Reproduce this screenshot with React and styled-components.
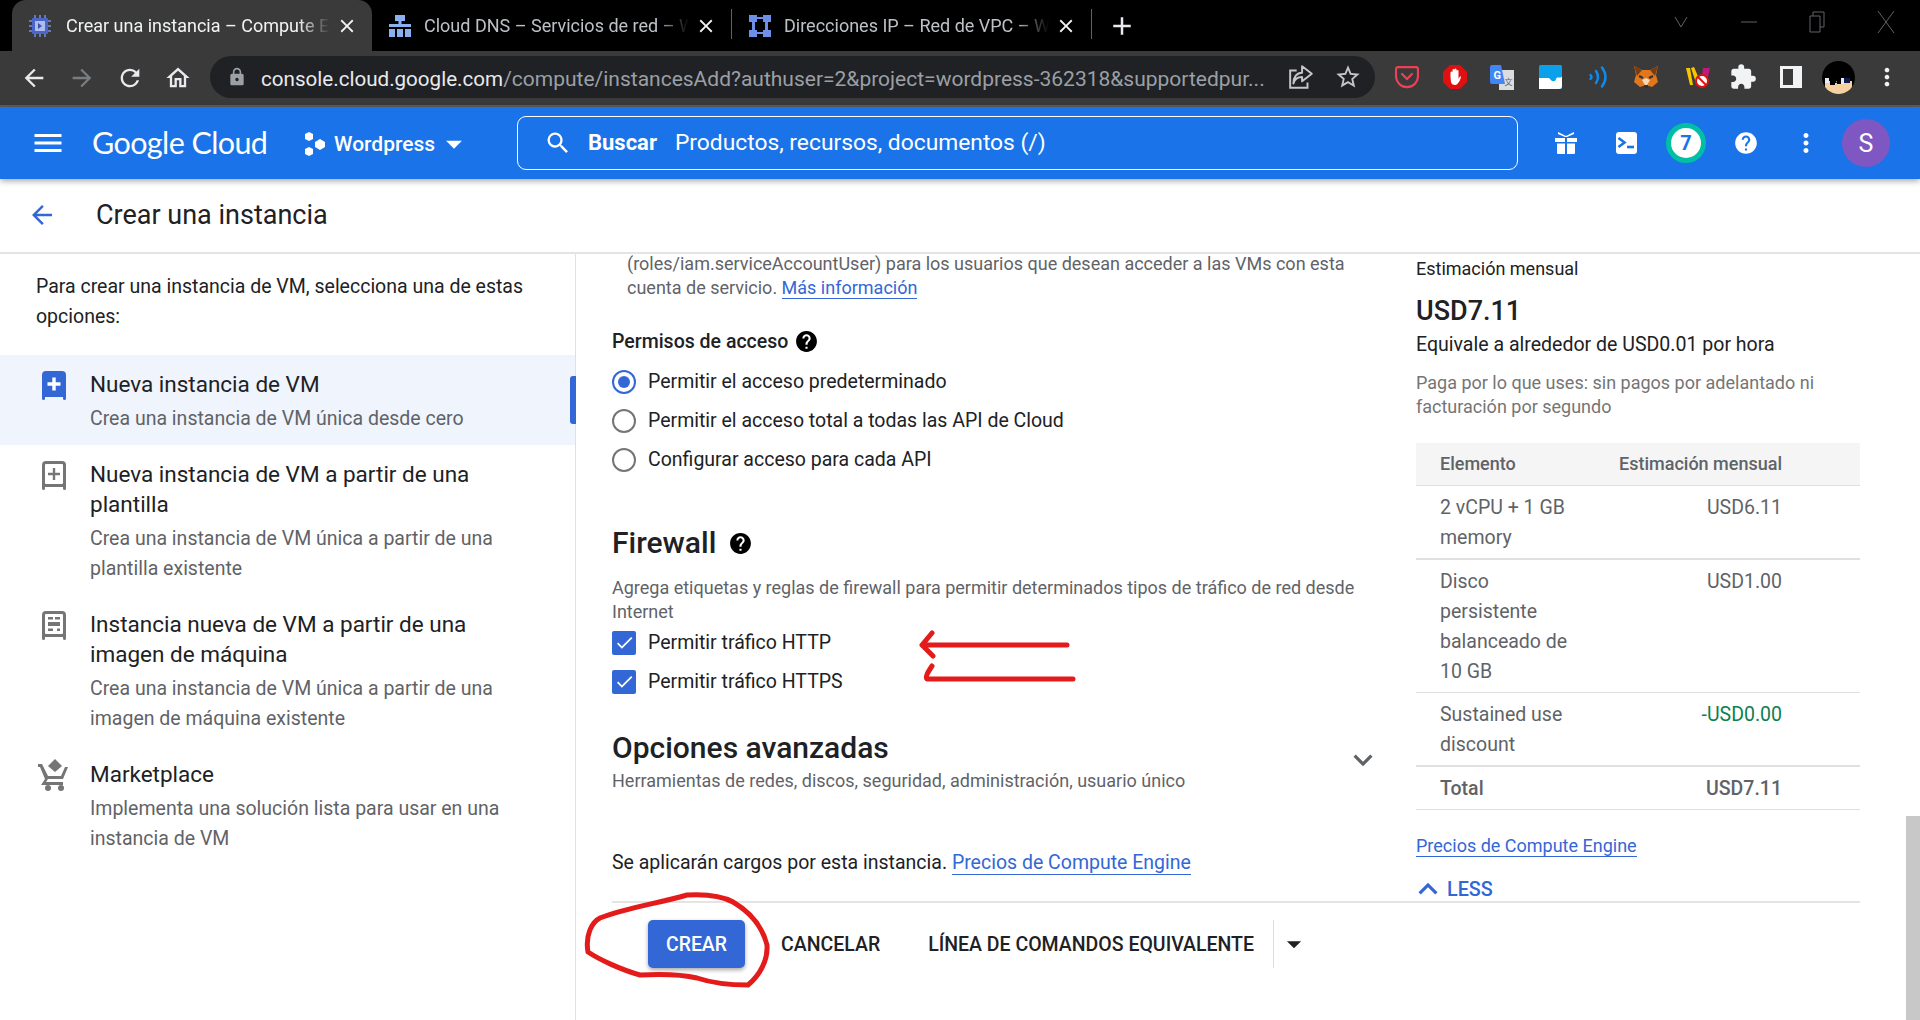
import React from "react";
import styled, { createGlobalStyle } from "styled-components";
import {
  MdArrowBack,
  MdArrowForward,
  MdRefresh,
  MdClose,
  MdAdd,
  MdLock,
  MdStarBorder,
  MdMenu,
  MdSearch,
  MdHelp,
  MdMoreVert,
  MdExpandMore,
  MdExpandLess,
  MdArrowDropDown,
  MdExtension,
  MdCheck,
  MdOutlineHome,
} from "react-icons/md";

const GlobalStyle = createGlobalStyle`
  * { box-sizing: border-box; }
  html, body { margin: 0; height: 100%; overflow: hidden; background: #fff; }
  body { font-family: Roboto, "Liberation Sans", sans-serif; color: #202124; }
`;

const Page = styled.div`
  position: relative;
  width: 1920px;
  height: 1020px;
  display: flex;
  flex-direction: column;
  overflow: hidden;
`;

/* browser chrome */
const TabStrip = styled.div`
  height: 51px;
  background: #000;
  display: flex;
  align-items: stretch;
  padding-left: 12px;
  flex-shrink: 0;
`;

const Tab = styled.div`
  width: ${(p) => (p.$active ? "360px" : "359px")};
  display: flex;
  align-items: center;
  padding: 0 14px 0 16px;
  background: ${(p) => (p.$active ? "#3a3a3a" : "transparent")};
  border-radius: 14px 14px 0 0;
  color: ${(p) => (p.$active ? "#f1f3f4" : "#bdc1c6")};
  position: relative;
`;

const TabDivider = styled.span`
  width: 1px;
  height: 30px;
  background: #5f6368;
  align-self: center;
  margin-top: -3px;
  flex-shrink: 0;
`;

const TabTitle = styled.span`
  flex: 1;
  margin-left: ${(p) => (p.$active ? 14 : 12)}px;
  font-size: 18px;
  white-space: nowrap;
  overflow: hidden;
  -webkit-mask-image: linear-gradient(to right, #000 88%, transparent);
  mask-image: linear-gradient(to right, #000 88%, transparent);
`;

const TabClose = styled(MdClose)`
  font-size: 22px;
  color: #f1f3f4;
  margin-left: 6px;
`;

const NewTab = styled(MdAdd)`
  font-size: 30px;
  color: #e8eaed;
  align-self: center;
  margin-left: 15px;
`;

const WindowButtons = styled.div`
  margin-left: auto;
  display: flex;
  align-items: center;
  height: 44px;
  gap: 52px;
  padding-right: 25px;
  color: #5f6368;
`;

const Toolbar = styled.div`
  height: 56px;
  background: #3a3a3a;
  border-bottom: 2px solid #5c5c5c;
  display: flex;
  align-items: center;
  flex-shrink: 0;
  position: relative;
`;

const NavIcons = styled.div`
  display: flex;
  align-items: center;
  gap: 20px;
  width: 210px;
  padding-left: 20px;
  color: #e8eaed;
  font-size: 28px;
`;

const Omnibox = styled.div`
  width: 1165px;
  height: 42px;
  border-radius: 21px;
  background: #202124;
  display: flex;
  align-items: center;
  padding: 0 13px 0 17px;
  margin-top: -2px;
`;

const Url = styled.div`
  margin-left: 14px;
  padding-top: 3px;
  flex: 1;
  font-size: 21px;
  color: #9aa0a6;
  white-space: nowrap;
  overflow: hidden;
  b {
    font-weight: 400;
    font-size: 20.6px;
    color: #e8eaed;
  }
`;

const OmniActions = styled.div`
  display: flex;
  align-items: center;
  gap: 20px;
  color: #c4c7ca;
  font-size: 28px;
  margin-left: 16px;
`;

const Extensions = styled.div`
  display: flex;
  align-items: center;
  margin-left: 8px;
  margin-top: -2px;
`;

const ExtSlot = styled.div`
  width: 47.8px;
  height: 40px;
  padding-left: ${(p) => p.$nudge || 0}px;
  display: flex;
  align-items: center;
  justify-content: center;
  color: #f1f3f4;
`;

/* cloud console header */
const CloudBar = styled.header`
  height: 72px;
  background: #1a73e8;
  display: flex;
  align-items: center;
  color: #fff;
  flex-shrink: 0;
  box-shadow: 0 2px 6px rgba(0, 0, 0, 0.35);
  position: relative;
  z-index: 2;
`;

const MenuButton = styled(MdMenu)`
  font-size: 36px;
  margin-left: 30px;
`;

const Logo = styled.div`
  margin-left: 26px;
  margin-top: -3px;
  font-family: Lato, Roboto, sans-serif;
  font-size: 30.5px;
  letter-spacing: -0.6px;
  width: 175px;
  white-space: nowrap;
`;

const ProjectPicker = styled.div`
  display: flex;
  align-items: center;
  margin-left: 37px;
  margin-top: 1px;
  width: 213px;
  font-size: 21px;
  font-weight: 500;
`;

const ProjectName = styled.span`
  margin-left: 8px;
`;

const SearchBox = styled.div`
  width: 1001px;
  height: 54px;
  border: 1px solid #fff;
  border-radius: 9px;
  display: flex;
  align-items: center;
  padding-left: 26px;
  font-size: 22.8px;
  margin-top: -1px;
  b {
    font-weight: 700;
    font-size: 22px;
    margin: 0 18px 0 16px;
  }
`;

const HeaderIcons = styled.div`
  display: flex;
  align-items: center;
  margin-left: 18px;
`;

const HeaderSlot = styled.div`
  width: 60px;
  height: 48px;
  display: flex;
  align-items: center;
  justify-content: center;
`;

const Notif = styled.div`
  width: 40px;
  height: 40px;
  border-radius: 50%;
  border: 5px solid #00bfa5;
  background: #fff;
  color: #1a73e8;
  font-size: 20px;
  font-weight: 700;
  display: flex;
  align-items: center;
  justify-content: center;
`;

const Avatar = styled.div`
  width: 48px;
  height: 48px;
  border-radius: 50%;
  background: #7e57c2;
  color: #fff;
  font-size: 25px;
  display: flex;
  align-items: center;
  justify-content: center;
`;

/* page title */
const TitleBar = styled.div`
  height: 75px;
  background: #fff;
  border-bottom: 2px solid #e4e4e4;
  display: flex;
  align-items: center;
  flex-shrink: 0;
  padding-bottom: 2px;
`;

const BackArrow = styled(MdArrowBack)`
  font-size: 30px;
  color: #3367d6;
  margin-left: 27px;
`;

const PageTitle = styled.h1`
  margin: 0 0 0 39px;
  font-size: 27px;
  font-weight: 400;
  color: #202124;
`;

const Body = styled.div`
  flex: 1;
  display: flex;
  min-height: 0;
`;

/* left picker */
const SidePanel = styled.aside`
  width: 576px;
  flex-shrink: 0;
  border-right: 1px solid #dfe1e5;
`;

const SideIntro = styled.p`
  margin: 0;
  padding: 18px 40px 0 36px;
  height: 101px;
  font-size: 19.5px;
  line-height: 30px;
  color: #202124;
`;

const SideItem = styled.div`
  position: relative;
  display: grid;
  grid-template-columns: 90px 1fr;
  padding: ${(p) => p.$pad};
  background: ${(p) => (p.$active ? "#f0f4fd" : "transparent")};
`;

const SideIcon = styled.div`
  display: flex;
  justify-content: center;
  padding-left: 17px;
  margin-top: ${(p) => (p.$cart ? "0" : "2px")};
  color: ${(p) => (p.$active ? "#3367d6" : "#757575")};
`;

const SideTitle = styled.div`
  font-size: 22.5px;
  line-height: 30px;
  color: #202124;
`;

const SideDesc = styled.div`
  font-size: 19.5px;
  line-height: 30px;
  margin-top: 5px;
  color: #5f6368;
`;

const ActiveMark = styled.span`
  position: absolute;
  right: -1px;
  top: 21px;
  width: 6px;
  height: 48px;
  border-radius: 3px 0 0 3px;
  background: #3367d6;
`;

/* form + estimate */
const Content = styled.main`
  flex: 1;
  display: flex;
  flex-direction: column;
  min-width: 0;
`;

const Upper = styled.div`
  height: 647px;
  display: flex;
  overflow: hidden;
`;

const FormColumn = styled.section`
  width: 840px;
  flex-shrink: 0;
  padding-left: 36px;
`;

const HintIndented = styled.p`
  margin: -2px 0 0 15px;
  width: 730px;
  font-size: 18px;
  line-height: 24px;
  color: #5f6368;
`;

const TextLink = styled.a`
  color: #3367d6;
  border-bottom: 1px solid #3367d6;
  text-decoration: none;
`;

const FieldLabel = styled.div`
  margin-top: 29px;
  display: flex;
  align-items: center;
  gap: 6px;
  font-size: 19.5px;
  font-weight: 500;
  line-height: 24px;
`;

const OptionRow = styled.label`
  height: 39px;
  display: flex;
  align-items: center;
  gap: 12px;
  font-size: 19.5px;
  color: #202124;
`;

const OptionGroup = styled.div`
  margin-top: ${(p) => p.$mt || 0}px;
`;

const Radio = styled.span`
  width: 24px;
  height: 24px;
  border-radius: 50%;
  border: 2.5px solid ${(p) => (p.$on ? "#3367d6" : "#757575")};
  display: flex;
  align-items: center;
  justify-content: center;
  &::after {
    content: "";
    width: 12px;
    height: 12px;
    border-radius: 50%;
    background: ${(p) => (p.$on ? "#3367d6" : "transparent")};
  }
`;

const Checkbox = styled.span`
  width: 24px;
  height: 24px;
  border-radius: 2px;
  background: #3367d6;
  color: #fff;
  font-size: 21px;
  display: flex;
  align-items: center;
  justify-content: center;
`;

const SectionTitle = styled.h2`
  margin: ${(p) => p.$mt}px 0 0;
  display: flex;
  align-items: center;
  gap: 12px;
  font-size: 30px;
  font-weight: 500;
  line-height: 36px;
  color: #202124;
`;

const Hint = styled.p`
  margin: ${(p) => p.$mt}px 0 0;
  width: 750px;
  font-size: 18px;
  line-height: 24px;
  color: #5f6368;
`;

const AdvancedRow = styled.div`
  position: relative;
  width: 760px;
`;

const AdvancedChevron = styled(MdExpandMore)`
  position: absolute;
  right: -10px;
  top: 11px;
  font-size: 38px;
  color: #5f6368;
`;

const ChargeNote = styled.p`
  margin: 57px 0 0;
  font-size: 19.5px;
  line-height: 26px;
  color: #202124;
`;

const EstimateColumn = styled.section`
  width: 444px;
  flex-shrink: 0;
`;

const EstLabel = styled.div`
  margin-top: 3px;
  font-size: 18px;
  line-height: 24px;
`;

const EstPrice = styled.div`
  margin-top: 12px;
  font-size: 27px;
  font-weight: 500;
  line-height: 36px;
`;

const EstHourly = styled.div`
  margin-top: 3px;
  font-size: 19.55px;
  line-height: 26px;
`;

const EstNote = styled.p`
  margin: 13px 0 0;
  font-size: 18px;
  line-height: 24px;
  color: #757575;
`;

const Table = styled.div`
  margin-top: 24px;
  font-size: 19.5px;
  color: #5f6368;
`;

const TableRow = styled.div`
  display: grid;
  grid-template-columns: 140px 1fr;
  padding: ${(p) => (p.$head ? "6px 78px 6px 24px" : "7px 78px 5px 24px")};
  line-height: 30px;
  border-bottom: ${(p) => p.$rule || 1}px solid #e0e0e0;
  background: ${(p) => (p.$head ? "#f5f5f5" : "transparent")};
  font-weight: ${(p) => (p.$bold ? 500 : 400)};
  font-size: ${(p) => (p.$head ? "18px" : "inherit")};
`;

const Amount = styled.div`
  text-align: right;
  white-space: nowrap;
  color: ${(p) => (p.$green ? "#0d8050" : "inherit")};
`;

const EstLink = styled.div`
  margin-top: 23px;
  font-size: 18px;
  line-height: 26px;
`;

const LessToggle = styled.div`
  margin-top: 18px;
  display: flex;
  align-items: center;
  height: 24px;
  color: #3367d6;
  font-size: 19.8px;
  font-weight: 500;
`;

const LessChevron = styled(MdExpandLess)`
  font-size: 38px;
  margin: 0 0 0 -7px;
`;

/* sticky actions */
const Footer = styled.div`
  margin-left: 36px;
  width: 1248px;
  border-top: 2px solid #e4e4e4;
  padding: 17px 0 0 36px;
  display: flex;
  align-items: flex-start;
`;

const PrimaryButton = styled.button`
  width: 97px;
  height: 48px;
  border: 0;
  border-radius: 5px;
  background: #3367d6;
  color: #fff;
  font-family: inherit;
  font-size: 19.4px;
  font-weight: 500;
  box-shadow: 0 2px 4px rgba(0, 0, 0, 0.35);
`;

const FlatButton = styled.button`
  height: 48px;
  border: 0;
  padding: 0;
  margin-left: ${(p) => p.$ml}px;
  background: none;
  color: #202124;
  font-family: inherit;
  font-size: 19.5px;
  font-weight: 500;
`;

const SplitCaret = styled.div`
  margin-left: 19px;
  height: 48px;
  border-left: 1px solid #dadce0;
  padding-left: 3px;
  display: flex;
  align-items: center;
  color: #202124;
  font-size: 34px;
`;

const Scrollbar = styled.div`
  position: absolute;
  right: 0;
  top: 816px;
  bottom: 0;
  width: 14px;
  background: #c8c8c8;
`;

const Scribbles = styled.svg`
  position: absolute;
  inset: 0;
  pointer-events: none;
`;

const TabChip = () => (
  <svg width="24" height="24" viewBox="0 0 24 24">
    <path d="M7 1v22M12 1v22M17 1v22M1 7h22M1 12h22M1 17h22" stroke="#7b8fe0" strokeWidth="1.5" />
    <rect x="4" y="4" width="16" height="16" rx="1" fill="#4a67c8" />
    <rect x="7" y="7" width="10" height="10" fill="#aebcf0" />
    <path d="M10 9l4 3-4 3z" fill="#3a55b0" />
  </svg>
);

const TabDns = () => (
  <svg width="24" height="24" viewBox="0 0 24 24" fill="#8ab0f0">
    <rect x="7" y="1" width="10" height="6" />
    <rect x="1" y="10" width="22" height="3" />
    <rect x="10.5" y="7" width="3" height="5" />
    <rect x="1" y="15" width="6" height="8" />
    <rect x="9" y="15" width="6" height="8" />
    <rect x="17" y="15" width="6" height="8" />
  </svg>
);

const TabIp = () => (
  <svg width="24" height="24" viewBox="0 0 24 24" fill="#6d8fe8">
    <rect x="1" y="1" width="8" height="7" />
    <rect x="15" y="1" width="8" height="7" />
    <rect x="1" y="16" width="8" height="7" />
    <rect x="15" y="16" width="8" height="7" />
    <rect x="4" y="8" width="3" height="8" />
    <rect x="17" y="8" width="3" height="8" />
    <rect x="9" y="3" width="6" height="2" />
    <rect x="9" y="18" width="6" height="2" />
  </svg>
);

const ShareIcon = () => (
  <svg width="26" height="26" viewBox="0 0 24 24" fill="none" stroke="#c4c7ca" strokeWidth="1.8">
    <path d="M8 6H2v16h16v-5" />
    <path d="M13 2l9 7-9 7v-4c-4 0-7 2-8 6 0-6 3-10 8-10z" strokeLinejoin="round" />
  </svg>
);

const PocketIcon = () => (
  <svg width="24" height="23" viewBox="0 0 24 23" fill="none" stroke="#ef4056" strokeWidth="2.2">
    <path d="M3 1.200h18a2 2 0 0 1 2 2v7a11 11 0 0 1-22 0v-7a2 2 0 0 1 2-2z" />
    <path d="M7 8l5 5 5-5" strokeLinecap="round" />
  </svg>
);

const StopIcon = () => (
  <svg width="24" height="24" viewBox="0 0 24 24">
    <path d="M7 0h10l7 7v10l-7 7H7l-7-7V7z" fill="#e01010" />
    <path d="M7.500 12V7.500a1 1 0 0 1 2 0V5a1 1 0 0 1 2 0V4.500a1 1 0 0 1 2 0V6a1 1 0 0 1 2 0v8c1-2 2-3 2.500-2.500 0 1-2 8-5.500 8.500-3 0-4-1-4.500-3z" fill="#fff" />
  </svg>
);

const TranslateIcon = () => (
  <svg width="24" height="25" viewBox="0 0 24 25">
    <path d="M9 5h15v20H9z" fill="#dadce0" />
    <path d="M0 2a2 2 0 0 1 2-2h9l4 19H2a2 2 0 0 1-2-2z" fill="#4285f4" />
    <text x="3.500" y="13.500" fontFamily="Roboto, sans-serif" fontSize="11" fontWeight="700" fill="#fff">G</text>
    <text x="14.500" y="20" fontFamily="'Noto Sans CJK SC', sans-serif" fontSize="8" fill="#5f6368">文</text>
  </svg>
);

const FolderIcon = () => (
  <svg width="23" height="24" viewBox="0 0 23 24">
    <rect width="23" height="24" rx="1.500" fill="#0aa0ea" />
    <path d="M0 13h10l3 3h3l2-4h5v9a3 3 0 0 1-3 3H0z" fill="#fff" />
    <path d="M15 16l2-4h5" stroke="#0aa0ea" strokeWidth="1" fill="none" />
  </svg>
);

const WaveIcon = () => (
  <svg width="19" height="22" viewBox="0 0 19 22" fill="none" stroke="#0d8cf0" strokeWidth="2.400" strokeLinecap="round">
    <path d="M1.500 9q2 2 0 4" />
    <path d="M7 5q4 6 0 12" />
    <path d="M13 1.500q7 9.500 0 19" />
  </svg>
);

const FoxIcon = () => (
  <svg width="24" height="24" viewBox="0 0 24 24">
    <path d="M0 1l8 4h8l8-4-2 9 2 7-6 5-3-1h-6l-3 1-6-5 2-7z" fill="#e2761b" />
    <path d="M0 1l8 4-5 6zM24 1l-8 4 5 6z" fill="#763d16" />
    <path d="M8 15l4 7 4-7-4-2z" fill="#f6d7b8" />
    <path d="M5 11l4 2M19 11l-4 2" stroke="#233447" strokeWidth="2" />
    <path d="M10 20h4v3h-4z" fill="#33302e" />
  </svg>
);

const BlockIcon = () => (
  <svg width="24" height="21" viewBox="0 0 24 21">
    <path d="M0 1h4l3 17H4z" fill="#f7c600" />
    <path d="M5 1l5 15 4-2-6-14z" fill="#f7c600" />
    <path d="M17 1h7l-2 9h-6z" fill="#c2187e" />
    <circle cx="16" cy="14" r="6" fill="#fff" stroke="#e01010" strokeWidth="2" />
    <path d="M12 10l8 8" stroke="#e01010" strokeWidth="2" />
  </svg>
);

const PanelIcon = () => (
  <svg width="22" height="22" viewBox="0 0 22 22">
    <path d="M0 0h22v22H0zM3 3v16h10V3z" fill="#f1f3f4" fillRule="evenodd" />
  </svg>
);

const ChromeAvatar = () => (
  <svg width="33" height="33" viewBox="0 0 33 33">
    <defs>
      <clipPath id="avatar-round">
        <circle cx="16.500" cy="16.500" r="16.500" />
      </clipPath>
    </defs>
    <g clipPath="url(#avatar-round)">
      <rect width="33" height="33" fill="#000" />
      <path d="M3 20h27v13H3z" fill="#f5d0a0" />
      <path d="M3 17h4v5H3z" fill="#e8eaf6" />
      <path d="M12 15l3 7h-3zM15 19h5v4h-5z" fill="#000" />
      <path d="M21 17h7v5h-7z" fill="#101a50" />
      <path d="M19 17h3v6h-3z" fill="#e8eaf6" />
      <path d="M8 17h5v7H8z" fill="#000" />
    </g>
  </svg>
);

const HexIcon = () => (
  <svg width="22" height="26" viewBox="0 0 22 26" fill="#fff">
    <path d="M5 1l4 2v5l-4 2-4-2V3z" />
    <path d="M16 8l5 3v5l-5 3-5-3v-5z" />
    <path d="M5 16l4 2v5l-4 2-4-2v-5z" />
  </svg>
);

const GiftIcon = () => (
  <svg width="22" height="22" viewBox="0 0 22 22" fill="#fff">
    <path d="M0 6h10v4H0zM12 6h10v4H12zM2 11.500h8V22H3a1 1 0 0 1-1-1zM12 11.500h8V21a1 1 0 0 1-1 1h-7z" />
    <path d="M3 0l8 4 8-4v2l-7 3h-2L3 2z" />
  </svg>
);

const TerminalIcon = () => (
  <svg width="21" height="22" viewBox="0 0 21 22">
    <rect width="21" height="22" rx="3" fill="#fff" />
    <path d="M2.500 6l6 4.500-6 4.500" stroke="#1a73e8" strokeWidth="2.600" fill="none" />
    <path d="M11 15h7" stroke="#1a73e8" strokeWidth="2.600" />
  </svg>
);

const VmIcon = ({ variant }) => (
  <svg width="24" height="29" viewBox="0 0 24 29">
    <path
      d="M4 0h16a4 4 0 0 1 4 4v23.500a1.500 1.500 0 0 1-3 0V26H3v1.500a1.500 1.500 0 0 1-3 0V4a4 4 0 0 1 4-4z"
      fill="currentColor"
    />
    {variant === "solid" && <path d="M10.300 6.500h3.400v4.800h4.800v3.400h-4.800v4.800h-3.400v-4.800H5.500v-3.400h4.800z" fill="#fff" />}
    {variant === "outline" && (
      <>
        <rect x="3" y="3" width="18" height="20" rx="1" fill="#fff" />
        <path d="M10.800 7h2.400v4.800H18v2.400h-4.800V19h-2.400v-4.800H6v-2.400h4.800z" fill="currentColor" />
      </>
    )}
    {variant === "image" && (
      <>
        <rect x="3" y="3" width="18" height="20" rx="1" fill="#fff" />
        <path d="M6 6h5v2.500H6zM13 6h5v2.500h-5zM6 11h12v4H6zM6 17.500h5V20H6zM15 17.500h3V20h-3z" fill="currentColor" />
      </>
    )}
  </svg>
);

const CartIcon = () => (
  <svg width="32" height="32" viewBox="0 0 32 32" fill="currentColor">
    <path d="M17 0l7 7-7 6-7-6z" />
    <path d="M0 5h4l2 4 4 8h13l4-9h3l-5 12H10l-2 3h17v3H3l4-6L2 8H0z" />
    <circle cx="10" cy="29" r="3" />
    <circle cx="23" cy="29" r="3" />
  </svg>
);

const sideItems = [
  {
    icon: "solid",
    title: "Nueva instancia de VM",
    desc: "Crea una instancia de VM única desde cero",
    active: true,
    pad: "14px 40px 11px 0",
  },
  {
    icon: "outline",
    title: "Nueva instancia de VM a partir de una plantilla",
    desc: "Crea una instancia de VM única a partir de una plantilla existente",
    pad: "14px 40px 11px 0",
  },
  {
    icon: "image",
    title: "Instancia nueva de VM a partir de una imagen de máquina",
    desc: "Crea una instancia de VM única a partir de una imagen de máquina existente",
    pad: "14px 40px 25px 0",
  },
  {
    icon: "cart",
    title: "Marketplace",
    desc: "Implementa una solución lista para usar en una instancia de VM",
    pad: "0 40px 0 0",
  },
];

const rows = [
  { name: "2 vCPU + 1 GB memory", price: "USD6.11", rule: 2 },
  { name: "Disco persistente balanceado de 10 GB", price: "USD1.00" },
  { name: "Sustained use discount", price: "-USD0.00", green: true, rule: 2 },
];

export default function App() {
  return (
    <Page>
      <GlobalStyle />
      <TabStrip>
        <Tab $active>
          <TabChip />
          <TabTitle $active>Crear una instancia – Compute Engine</TabTitle>
          <TabClose />
        </Tab>
        <Tab>
          <TabDns />
          <TabTitle>Cloud DNS – Servicios de red – Wordpress</TabTitle>
          <TabClose />
        </Tab>
        <TabDivider />
        <Tab>
          <TabIp />
          <TabTitle>Direcciones IP – Red de VPC – Wordpress</TabTitle>
          <TabClose />
        </Tab>
        <TabDivider />
        <NewTab />
        <WindowButtons>
          <svg width="16" height="12" viewBox="0 0 16 12" fill="none" stroke="currentColor"><path d="M2 1l6 10 6-10" /></svg>
          <svg width="16" height="2" viewBox="0 0 16 2"><path d="M0 1h16" stroke="currentColor" /></svg>
          <svg width="16" height="22" viewBox="0 0 16 22" fill="none" stroke="currentColor"><path d="M1 5h10v16H1zM4 5V1h11v15h-4" /></svg>
          <svg width="18" height="24" viewBox="0 0 18 24" fill="none" stroke="currentColor"><path d="M1 1l16 22M17 1L1 23" /></svg>
        </WindowButtons>
      </TabStrip>

      <Toolbar>
        <NavIcons>
          <MdArrowBack />
          <MdArrowForward color="#7a7d80" />
          <MdRefresh />
          <MdOutlineHome />
        </NavIcons>
        <Omnibox>
          <MdLock size={20} color="#9aa0a6" />
          <Url>
            <b>console.cloud.google.com</b>/compute/instancesAdd?authuser=2&amp;project=wordpress-362318&amp;supportedpur...
          </Url>
          <OmniActions>
            <ShareIcon />
            <MdStarBorder />
          </OmniActions>
        </Omnibox>
        <Extensions>
          <ExtSlot><PocketIcon /></ExtSlot>
          <ExtSlot><StopIcon /></ExtSlot>
          <ExtSlot><TranslateIcon /></ExtSlot>
          <ExtSlot><FolderIcon /></ExtSlot>
          <ExtSlot><WaveIcon /></ExtSlot>
          <ExtSlot><FoxIcon /></ExtSlot>
          <ExtSlot $nudge={8}><BlockIcon /></ExtSlot>
          <ExtSlot $nudge={4}><MdExtension size={28} /></ExtSlot>
          <ExtSlot $nudge={4}><PanelIcon /></ExtSlot>
          <ExtSlot $nudge={2}><ChromeAvatar /></ExtSlot>
          <ExtSlot $nudge={4}><MdMoreVert size={28} /></ExtSlot>
        </Extensions>
      </Toolbar>

      <CloudBar>
        <MenuButton />
        <Logo>Google Cloud</Logo>
        <ProjectPicker>
          <HexIcon />
          <ProjectName>Wordpress</ProjectName>
          <MdArrowDropDown size={38} />
        </ProjectPicker>
        <SearchBox>
          <MdSearch size={28} />
          <b>Buscar</b>
          Productos, recursos, documentos (/)
        </SearchBox>
        <HeaderIcons>
          <HeaderSlot><GiftIcon /></HeaderSlot>
          <HeaderSlot><TerminalIcon /></HeaderSlot>
          <HeaderSlot><Notif>7</Notif></HeaderSlot>
          <HeaderSlot><MdHelp size={26} /></HeaderSlot>
          <HeaderSlot><MdMoreVert size={30} /></HeaderSlot>
          <HeaderSlot><Avatar>S</Avatar></HeaderSlot>
        </HeaderIcons>
      </CloudBar>

      <TitleBar>
        <BackArrow />
        <PageTitle>Crear una instancia</PageTitle>
      </TitleBar>

      <Body>
        <SidePanel>
          <SideIntro>Para crear una instancia de VM, selecciona una de estas opciones:</SideIntro>
          {sideItems.map((item) => (
            <SideItem key={item.title} $active={item.active} $pad={item.pad}>
              <SideIcon $active={item.active} $cart={item.icon === "cart"}>
                {item.icon === "cart" ? <CartIcon /> : <VmIcon variant={item.icon} />}
              </SideIcon>
              <div>
                <SideTitle>{item.title}</SideTitle>
                <SideDesc>{item.desc}</SideDesc>
              </div>
              {item.active && <ActiveMark />}
            </SideItem>
          ))}
        </SidePanel>

        <Content>
          <Upper>
            <FormColumn>
              <HintIndented>
                (roles/iam.serviceAccountUser) para los usuarios que desean acceder a las VMs con esta cuenta de servicio.{" "}
                <TextLink>Más información</TextLink>
              </HintIndented>
              <FieldLabel>
                Permisos de acceso <MdHelp size={25} color="#000" />
              </FieldLabel>
              <OptionGroup $mt={8}>
                <OptionRow><Radio $on />Permitir el acceso predeterminado</OptionRow>
                <OptionRow><Radio />Permitir el acceso total a todas las API de Cloud</OptionRow>
                <OptionRow><Radio />Configurar acceso para cada API</OptionRow>
              </OptionGroup>
              <SectionTitle $mt={46}>
                Firewall <MdHelp size={25} color="#000" />
              </SectionTitle>
              <Hint $mt={15}>
                Agrega etiquetas y reglas de firewall para permitir determinados tipos de tráfico de red desde Internet
              </Hint>
              <OptionGroup $mt={-1}>
                <OptionRow><Checkbox><MdCheck /></Checkbox>Permitir tráfico HTTP</OptionRow>
                <OptionRow><Checkbox><MdCheck /></Checkbox>Permitir tráfico HTTPS</OptionRow>
              </OptionGroup>
              <AdvancedRow>
                <SectionTitle $mt={29}>Opciones avanzadas</SectionTitle>
                <Hint $mt={3}>Herramientas de redes, discos, seguridad, administración, usuario único</Hint>
                <AdvancedChevron />
              </AdvancedRow>
              <ChargeNote>
                Se aplicarán cargos por esta instancia. <TextLink>Precios de Compute Engine</TextLink>
              </ChargeNote>
            </FormColumn>

            <EstimateColumn>
              <EstLabel>Estimación mensual</EstLabel>
              <EstPrice>USD7.11</EstPrice>
              <EstHourly>Equivale a alrededor de USD0.01 por hora</EstHourly>
              <EstNote>Paga por lo que uses: sin pagos por adelantado ni facturación por segundo</EstNote>
              <Table>
                <TableRow $head $bold>
                  <div>Elemento</div>
                  <Amount>Estimación mensual</Amount>
                </TableRow>
                {rows.map((row) => (
                  <TableRow key={row.name} $rule={row.rule}>
                    <div>{row.name}</div>
                    <Amount $green={row.green}>{row.price}</Amount>
                  </TableRow>
                ))}
                <TableRow $bold>
                  <div>Total</div>
                  <Amount>USD7.11</Amount>
                </TableRow>
              </Table>
              <EstLink><TextLink>Precios de Compute Engine</TextLink></EstLink>
              <LessToggle><LessChevron />LESS</LessToggle>
            </EstimateColumn>
          </Upper>

          <Footer>
            <PrimaryButton>CREAR</PrimaryButton>
            <FlatButton $ml={36}>CANCELAR</FlatButton>
            <FlatButton $ml={48}>LÍNEA DE COMANDOS EQUIVALENTE</FlatButton>
            <SplitCaret><MdArrowDropDown /></SplitCaret>
          </Footer>
        </Content>
      </Body>

      <Scrollbar />

      <Scribbles width="1920" height="1020" viewBox="0 0 1920 1020" fill="none" stroke="#e41b1b" strokeLinecap="round" strokeLinejoin="round">
        <path strokeWidth="5" d="M1067 645H924M932 633l-10 12 11 11" />
        <path strokeWidth="5" d="M1073 679H927C925 677 928 672 932 666" />
        <path strokeWidth="5" d="M687 895C705 894 722 896 733 902C750 912 762 925 767 945C768 960 760 975 748 985C730 985 712 983 697 978C680 974 660 974 640 975C622 970 600 960 588 952C585 935 592 922 600 918C625 908 660 903 687 895Z" />
      </Scribbles>
    </Page>
  );
}
